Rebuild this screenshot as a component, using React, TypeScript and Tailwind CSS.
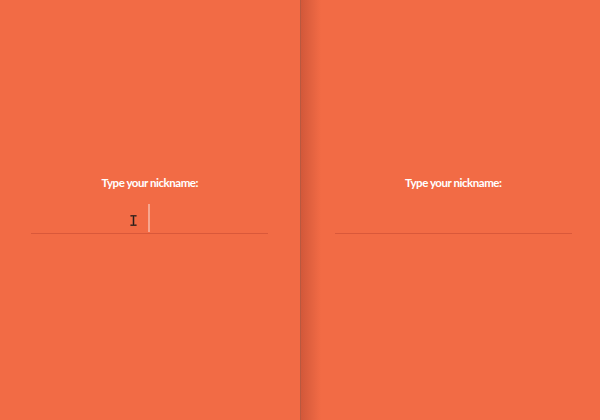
import React from "react";

function Panel({ active }: { active?: boolean }) {
  return (
    <div className="flex-1 h-full bg-[#f26b45] flex flex-col items-center pt-[175px]">
      <p className="text-white font-bold text-[11.5px] tracking-[-0.45px] leading-[16px] font-['Lato',sans-serif]">
        Type your nickname:
      </p>
      <div className="relative mt-[11px] w-[237px] h-[32px] border-b border-[#d9583a]">
        {active && (
          <>
            <span className="absolute left-[117px] top-[2px] w-[2px] h-[28px] bg-[#f7a68f]" />
            <svg
              className="absolute left-[99px] top-[13px]"
              width="7"
              height="11"
              viewBox="0 0 7 11"
            >
              <path d="M0.5 0.8h6M0.5 10.2h6M3.5 0.8v9.4" stroke="#5a3a30" strokeWidth="2.2" fill="none" opacity="0.5" />
              <path d="M0.5 0.8h6M0.5 10.2h6M3.5 0.8v9.4" stroke="#2a1d18" strokeWidth="1.1" fill="none" />
            </svg>
          </>
        )}
      </div>
    </div>
  );
}

export default function App() {
  return (
    <div className="w-[600px] h-[420px] flex bg-[#f26b45] overflow-hidden">
      <Panel active />
      <div className="w-[1px] h-full bg-[#b8583f]" />
      <div className="relative flex-1 h-full">
        <div className="absolute inset-y-0 left-0 w-[20px] bg-gradient-to-r from-[#d2583a] to-transparent z-10" />
        <div className="h-full flex pl-[6px]">
          <Panel />
        </div>
      </div>
    </div>
  );
}
